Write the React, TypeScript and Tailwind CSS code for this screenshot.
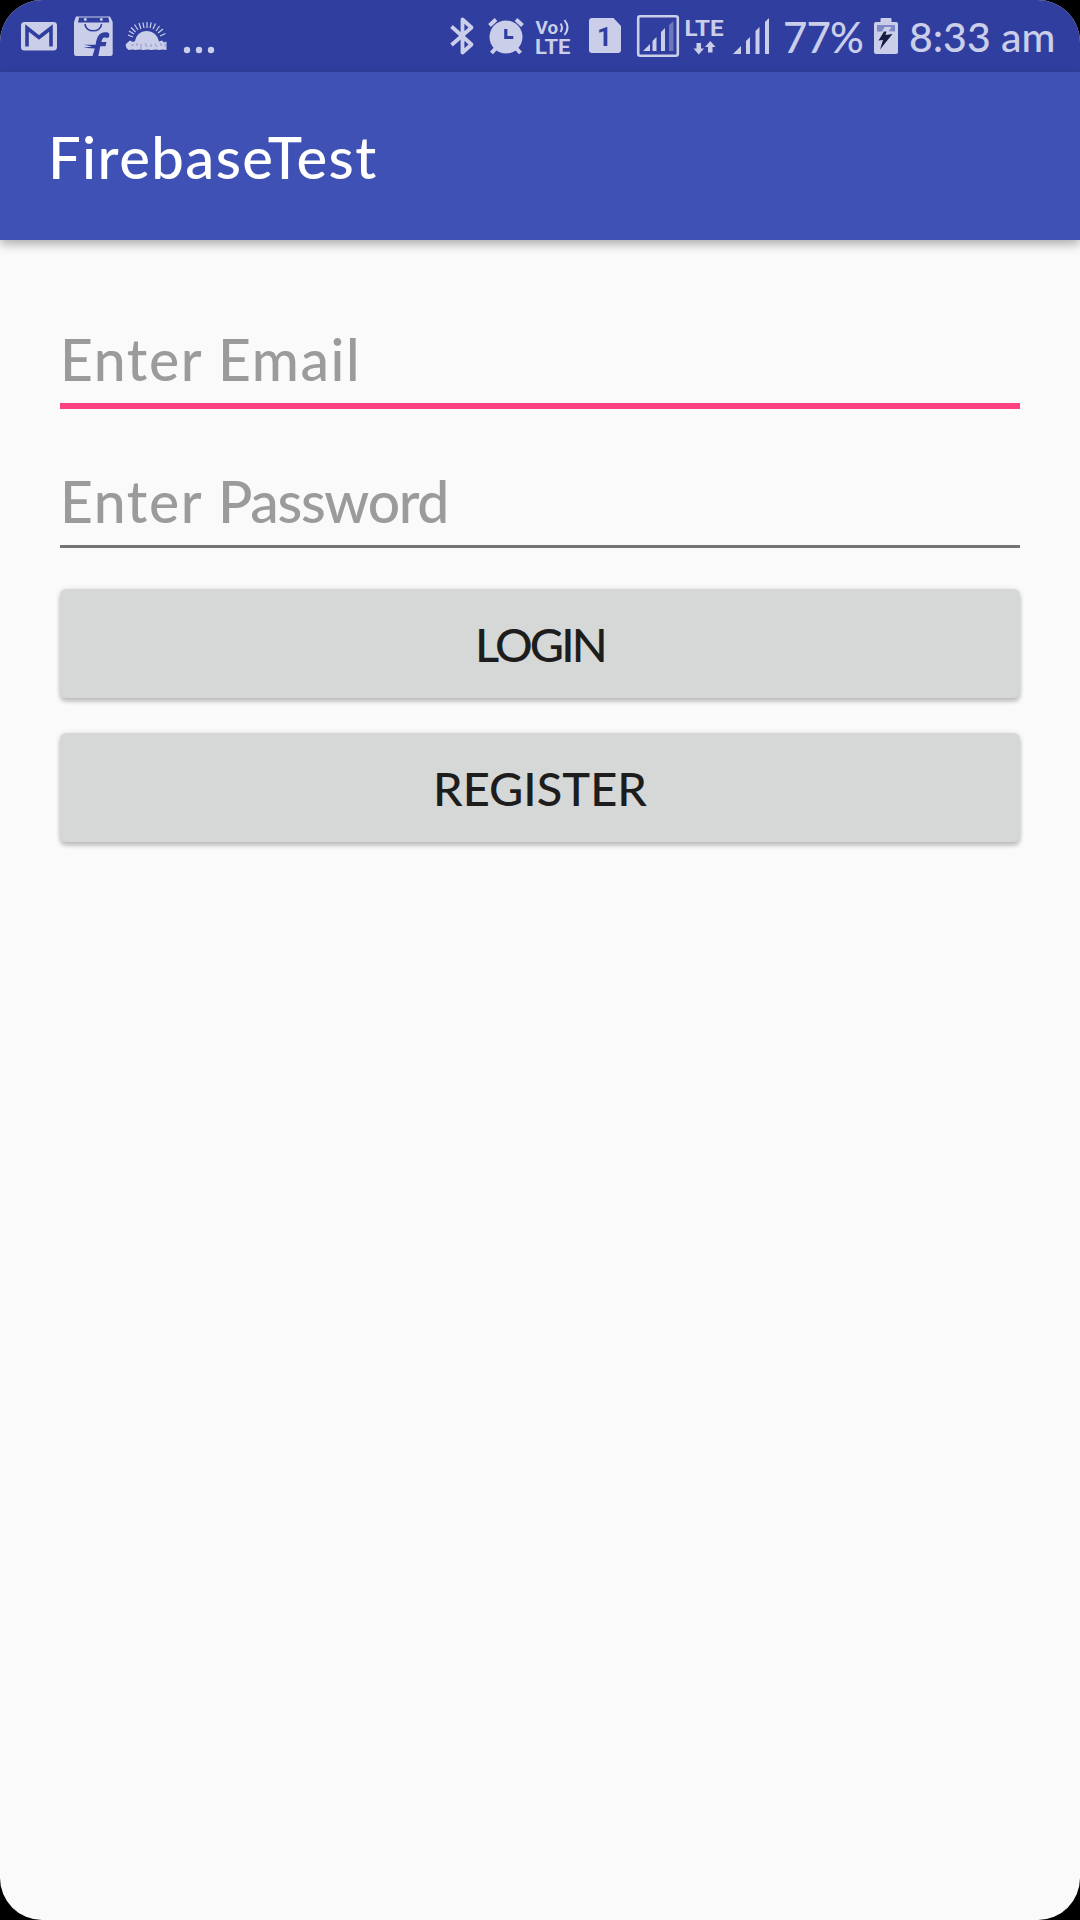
import { clsx } from "clsx";

// Each status glyph is drawn on the 72px bar, so every viewBox is as tall as the bar.
function Glyph({ x, w, className, children }: { x: number; w: number; className?: string; children: React.ReactNode }) {
  return (
    <svg width={w} height={72} viewBox={`${x} 0 ${w} 72`} fill="currentColor" className={clsx("block shrink-0 overflow-visible", className)}>
      {children}
    </svg>
  );
}

function Gmail() {
  return (
    <Glyph x={21} w={36}>
      <rect x="21" y="22" width="36" height="28.5" rx="3.5" />
      <path d="M27 46.5V28l12 9.5L51 28v18.5" fill="none" stroke="#303f9f" strokeWidth="3.6" />
    </Glyph>
  );
}

function Flipkart() {
  return (
    <Glyph x={74} w={39} className="ml-[17px]">
      <path d="M76 16.5h34l2.7 5.5v31.500a2.500 2.500 0 0 1-2.500 2.500H76.500a2.500 2.500 0 0 1-2.500-2.500V22z" />
      <path d="M79 17.500h29.500l.8 5H78z" fill="#303f9f" />
      <path d="M85 24c0 9 16.500 9 16.500 0" fill="none" stroke="#303f9f" strokeWidth="1.600" />
      <circle cx="85.300" cy="19.500" r="1.400" />
      <circle cx="101.300" cy="19.500" r="1.400" />
      <path d="M92.500 56l2.300-7.500-11.500-.8 9-1.200-8.500-1.800h11.800c1.200-7.500 3.200-12.500 9.500-12.500 2.500 0 4.500.5 4.200 3.200-.2 2.300-2 3-3.800 2.200-2.300-.8-3.200.8-4.200 4.500h5.200l-1 4.200h-5.200L98.300 56z" fill="#303f9f" />
    </Glyph>
  );
}

function Sunrise() {
  return (
    <Glyph x={126} w={42} className="ml-[13px]">
      <path d="M135 43c0-16 23-16 24 0z" />
      <path
        d="M133 37l-5-2M134 34l-5-3M135.500 32l-4.500-4.500M138 30l-3.500-5.500M141 29l-2-6M144 28l-1-5.500M147 28v-6M150 28l1.200-5.500M153 29l2.500-5.500M156 31l3.500-5M158 33l5-4M160 36l5.500-2.500"
        stroke="currentColor"
        strokeWidth="1.2"
      />
      <path d="M127 43l3-2.500 3 1.500 3-1.500 4 1 3-1 3 .5 4-1 1-1 2 1.500 4-.5 2 1.500 3-1 2 2 2.500-1V50l-4-.5-3 .5-4-.5-4 .5-4-.5-4 .5-4-.5-4 .5-3-.5-4 .5-2-2-1-3z" />
      <path d="M131 45h3M137 43v3M141 44v5M145 43l2 4M151 44v3M155 44l2 3M161 43v3M165 44v3" stroke="#303f9f" strokeWidth=".8" opacity=".5" />
    </Glyph>
  );
}

function Bluetooth() {
  return (
    <Glyph x={450} w={24}>
      <path d="M451.500 26.500l20 18-9 8V19.500l9 8-20 17.500" fill="none" stroke="currentColor" strokeWidth="3.800" strokeLinejoin="round" />
    </Glyph>
  );
}

function Alarm() {
  return (
    <Glyph x={488} w={36} className="ml-[14px]">
      <circle cx="506" cy="37" r="16.500" />
      <path d="M489.500 25.500l6.500-6M522.500 25.500l-6.500-6M496 48l-4.500 5M516 48l4.500 5" stroke="currentColor" strokeWidth="4" />
      <path d="M505.800 29v8.500h7.500" fill="none" stroke="#303f9f" strokeWidth="3.200" />
    </Glyph>
  );
}

function VoLte() {
  return (
    <Glyph x={535} w={36} className="ml-[11px]">
      <text x="535.500" y="33.500" fontSize="18" textLength="22.500" lengthAdjust="spacingAndGlyphs" className="font-['Roboto',sans-serif] font-bold">Vo</text>
      <path d="M560.500 23.500q3 4 0 8.500M564.500 20q6 7.500 0 15" fill="none" stroke="currentColor" strokeWidth="2" />
      <text x="535" y="54" fontSize="19.500" textLength="35.500" lengthAdjust="spacingAndGlyphs" className="font-['Roboto',sans-serif] font-bold">LTE</text>
    </Glyph>
  );
}

function Sim() {
  return (
    <Glyph x={589} w={32} className="ml-[18px]">
      <path d="M592 18h21.500l7.500 8v24a3 3 0 0 1-3 3h-26a3 3 0 0 1-3-3V21a3 3 0 0 1 3-3z" />
      <text x="597" y="45.500" fontSize="26" fill="#303f9f" className="font-['Roboto',sans-serif] font-bold">1</text>
    </Glyph>
  );
}

function BoxedSignal() {
  return (
    <Glyph x={637} w={42} className="ml-[16px]">
      <rect x="638.200" y="16.200" width="39.600" height="39.600" rx="2" fill="none" stroke="currentColor" strokeWidth="2.600" />
      <path d="M643 51l7-7v7zM652.500 41l4-4v14h-4zM661 32l4-4v23h-4z" />
      <path d="M669 25l4.500-4v30H669z" opacity=".4" />
    </Glyph>
  );
}

function LteData() {
  return (
    <Glyph x={685} w={38} className="ml-[6px]">
      <text x="684.500" y="36" fontSize="22.500" textLength="39" lengthAdjust="spacingAndGlyphs" className="font-['Roboto',sans-serif] font-bold">LTE</text>
      <path d="M696.500 43h4.500v5.500h3l-5.200 6-5.300-6h3zM708 52.500h4.500V47h3l-5.200-6-5.300 6h3z" />
    </Glyph>
  );
}

function Signal() {
  return (
    <Glyph x={733} w={36} className="ml-[10px]">
      <path d="M733 54l8-8v8zM746 41l4-4v17h-4zM755.500 31l4-4v27h-4zM765 22l4-4v36h-4z" />
    </Glyph>
  );
}

function Battery() {
  return (
    <Glyph x={874} w={24} className="ml-[12px]">
      <path d="M874 24a2 2 0 0 1 2-2h4.500v-3a1 1 0 0 1 1-1h9a1 1 0 0 1 1 1v3h4.500a2 2 0 0 1 2 2v28a2 2 0 0 1-2 2h-20a2 2 0 0 1-2-2z" />
      <path d="M877 25h18v6.500h-18z" fill="#7d89c5" />
      <path d="M884.500 27h7l-3 4.500h4l-12 17 3-11.500h-4z" />
      <path d="M884 31.500h2.500l-1 3.500 7-1-12.500 15.500 3-9.500-4.500.5z" fill="#161c42" />
    </Glyph>
  );
}

function StatusBar() {
  return (
    <div className="h-[72px] bg-[#303f9f] text-[#cacee9] flex pl-[21px] font-[Lato,sans-serif] whitespace-nowrap">
      <Gmail />
      <Flipkart />
      <Sunrise />
      <Glyph x={184} w={30} className="ml-[16px]">
        <circle cx="187" cy="50" r="3.200" />
        <circle cx="199" cy="50" r="3.200" />
        <circle cx="211" cy="50" r="3.200" />
      </Glyph>
      <div className="flex ml-[236px]">
        <Bluetooth />
        <Alarm />
        <VoLte />
        <Sim />
        <BoxedSignal />
        <LteData />
        <Signal />
        <span className="ml-[14px] w-[79px] text-[42px] font-medium leading-[74px] tracking-[-0.9px]">77%</span>
        <Battery />
        <span className="ml-[11px] text-[41px] font-medium leading-[74px]">8:33 am</span>
      </div>
    </div>
  );
}

function Field({ focused, className, children }: { focused?: boolean; className?: string; children: React.ReactNode }) {
  return (
    <div className={clsx("text-[#9b9b9b] text-[57px] font-medium leading-[68px] tracking-[1.6px]", focused ? "border-b-[6px] border-[#ff4081]" : "border-b-[3px] border-[#747474]", className)}>
      {children}
    </div>
  );
}

function Button({ children, className }: { children: React.ReactNode; className?: string }) {
  return (
    <button
      className={clsx(
        "block w-full h-[109px] pt-px rounded-[6px] bg-[#d6d8d7] text-[#1c1d1c] text-[47px] font-medium leading-none shadow-[0_4px_4px_rgba(0,0,0,0.2),0_0_5px_rgba(0,0,0,0.12)]",
        className,
      )}
    >
      {children}
    </button>
  );
}

export default function App() {
  return (
    <div className="w-[1080px] h-[1920px] bg-black">
      <div className="h-full rounded-[42px] overflow-hidden bg-[#fafafa] font-[Lato,sans-serif]">
        <StatusBar />
        <header className="h-[168px] bg-[#3f51b5] pl-[48px] flex items-center text-white text-[58px] font-medium tracking-[1.4px] shadow-[0_4px_10px_rgba(0,0,0,0.32)]">
          <h1>FirebaseTest</h1>
        </header>
        <main className="px-[60px] pt-[85px]">
          <Field focused className="h-[84px]">Enter Email</Field>
          <Field className="mt-[57px] h-[82px] pt-[1px]">
            Enter <span className="tracking-[-1.3px]">Password</span>
          </Field>
          <Button className="mt-[41px] tracking-[-2.8px]">LOGIN</Button>
          <Button className="mt-[35px]">REGISTER</Button>
        </main>
      </div>
    </div>
  );
}
